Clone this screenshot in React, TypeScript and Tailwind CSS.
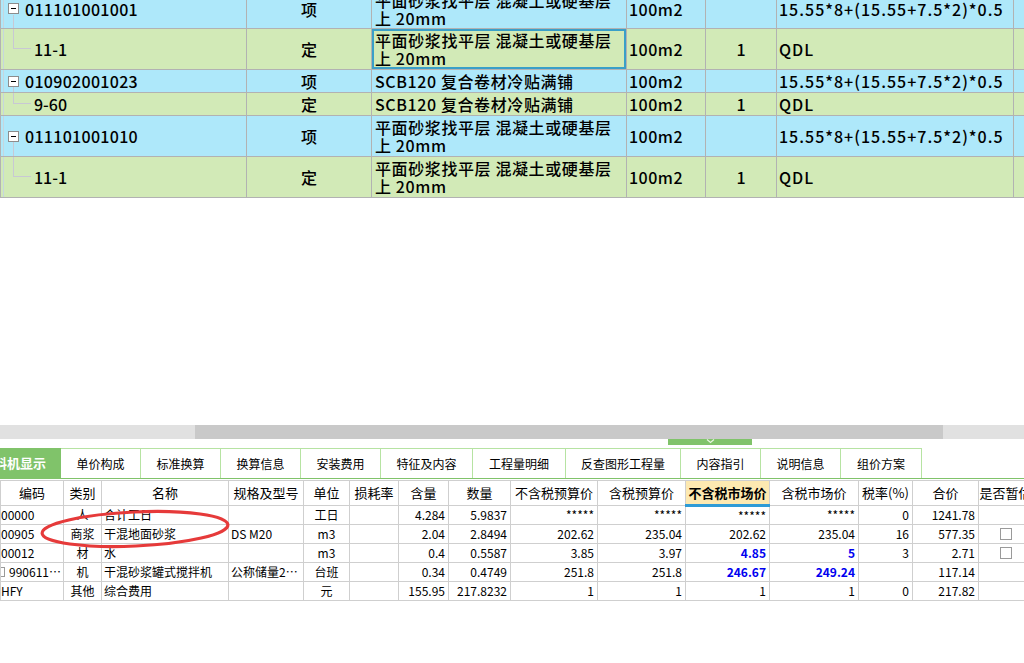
import React from "react";

type TopRow = {
  code: string;
  kind: string;
  name: React.ReactNode;
  qty: string;
  expr: string;
  parent: boolean;
  tall: boolean;
  focus?: boolean;
};

const longName = (
  <>
    平面砂浆找平层 混凝土或硬基层
    <br />
    上 20mm
  </>
);
const expr = "15.55*8+(15.55+7.5*2)*0.5";

const topRows: TopRow[] = [
  { code: "011101001001", kind: "项", name: longName, qty: "", expr, parent: true, tall: true },
  { code: "11-1", kind: "定", name: longName, qty: "1", expr: "QDL", parent: false, tall: true, focus: true },
  { code: "010902001023", kind: "项", name: "SCB120 复合卷材冷贴满铺", qty: "", expr, parent: true, tall: false },
  { code: "9-60", kind: "定", name: "SCB120 复合卷材冷贴满铺", qty: "1", expr: "QDL", parent: false, tall: false },
  { code: "011101001010", kind: "项", name: longName, qty: "", expr, parent: true, tall: true },
  { code: "11-1", kind: "定", name: longName, qty: "1", expr: "QDL", parent: false, tall: true },
];

const tabs = [
  { label: "单价构成", w: "w-[80px]" },
  { label: "标准换算", w: "w-[80px]" },
  { label: "换算信息", w: "w-[80px]" },
  { label: "安装费用", w: "w-[80px]" },
  { label: "特征及内容", w: "w-[92px]" },
  { label: "工程量明细", w: "w-[93px]" },
  { label: "反查图形工程量", w: "w-[115px]" },
  { label: "内容指引", w: "w-[80px]" },
  { label: "说明信息", w: "w-[80px]" },
  { label: "组价方案", w: "w-[81px]" },
];

const cols = [
  { h: "编码", w: 63, align: "text-left" },
  { h: "类别", w: 38, align: "text-center" },
  { h: "名称", w: 127, align: "text-left" },
  { h: "规格及型号", w: 75, align: "text-left" },
  { h: "单位", w: 46, align: "text-center" },
  { h: "损耗率", w: 49, align: "text-right" },
  { h: "含量", w: 50, align: "text-right" },
  { h: "数量", w: 62, align: "text-right" },
  { h: "不含税预算价", w: 87, align: "text-right" },
  { h: "含税预算价", w: 88, align: "text-right" },
  { h: "不含税市场价", w: 84, align: "text-right" },
  { h: "含税市场价", w: 89, align: "text-right" },
  { h: "税率(%)", w: 54, align: "text-right" },
  { h: "合价", w: 66, align: "text-right" },
  { h: "是否暂估", w: 54, align: "text-center" },
];

// blue = market price edited by hand
type Cell = string | { v: string; blue: true } | { check: true };

const detailRows: Cell[][] = [
  ["00000", "人", "合计工日", "", "工日", "", "4.284", "5.9837", "*****", "*****", "*****", "*****", "0", "1241.78", ""],
  ["00905", "商浆", "干混地面砂浆", "DS M20", "m3", "", "2.04", "2.8494", "202.62", "235.04", "202.62", "235.04", "16", "577.35", { check: true }],
  ["00012", "材", "水", "", "m3", "", "0.4", "0.5587", "3.85", "3.97", { v: "4.85", blue: true }, { v: "5", blue: true }, "3", "2.71", { check: true }],
  ["990611…", "机", "干混砂浆罐式搅拌机", "公称储量2…", "台班", "", "0.34", "0.4749", "251.8", "251.8", { v: "246.67", blue: true }, { v: "249.24", blue: true }, "", "117.14", ""],
  ["HFY", "其他", "综合费用", "", "元", "", "155.95", "217.8232", "1", "1", "1", "1", "0", "217.82", ""],
];

function TreeCell({ row }: { row: TopRow }) {
  return (
    <td className="relative border border-[#b2b2b2] p-0">
      <span className="absolute left-[2px] top-0 bottom-0 border-l border-[#c6d6de]" />
      {row.parent ? (
        <>
          <div className="flex items-center">
            <span className="ml-[7px] flex h-[11px] w-[11px] items-center justify-center border border-[#8c8c8c] bg-white">
              <span className="h-px w-[5px] bg-black" />
            </span>
            <span className="ml-[6px] tracking-[0.3px]">{row.code}</span>
          </div>
          <span className="absolute left-[12px] top-[calc(50%+6px)] bottom-0 border-l border-[#c8c8d4]" />
        </>
      ) : (
        <>
          <span className="absolute left-[12px] top-0 h-1/2 w-[18px] border-b border-l border-[#c8c8d4]" />
          <span className="pl-[33px]">{row.code}</span>
        </>
      )}
    </td>
  );
}

export default function App() {
  return (
    <div className="flex h-[663px] w-[1024px] flex-col overflow-hidden bg-white font-['Noto_Sans_CJK_SC','Noto_Sans',sans-serif] text-black">
      {/* upper grid: bill items, scrolled a little */}
      <div className="h-[425px] shrink-0 overflow-hidden">
        <table className="-mt-[12px] w-[1040px] table-fixed border-collapse text-[16px] font-medium leading-[18px]">
          <colgroup>
            <col className="w-[246px]" />
            <col className="w-[125px]" />
            <col className="w-[255px]" />
            <col className="w-[79px]" />
            <col className="w-[71px]" />
            <col className="w-[237px]" />
            <col className="w-[27px]" />
          </colgroup>
          <tbody>
            {topRows.map((r, i) => (
              <tr
                key={i}
                className={`${r.tall ? (i === 0 ? "h-[40px]" : "h-[41px]") : "h-[23px]"} ${
                  r.parent ? "bg-[#aee8fa]" : "bg-[#d2eab7]"
                }`}
              >
                <TreeCell row={r} />
                <td className="border border-[#b2b2b2] p-0 text-center">{r.kind}</td>
                <td className="relative border border-[#b2b2b2] px-[3px] py-0 tracking-[0.6px]">
                  {r.focus && <span className="absolute inset-0 border-2 border-[#3a9fc8]" />}
                  {r.name}
                </td>
                <td className="border border-[#b2b2b2] py-0 pl-[2px] tracking-[0.5px]">100m2</td>
                <td className="border border-[#b2b2b2] p-0 text-center">{r.qty}</td>
                <td className="whitespace-nowrap border border-[#b2b2b2] py-0 pl-[2px] tracking-[1px]">{r.expr}</td>
                <td className="border border-[#b2b2b2] p-0" />
              </tr>
            ))}
          </tbody>
        </table>
      </div>

      {/* horizontal scrollbar */}
      <div className="flex h-[14px] shrink-0 bg-[#e1e1e1]">
        <div className="w-[195px]" />
        <div className="w-[748px] bg-[#c9c9c9]" />
      </div>

      {/* splitter handle */}
      <div className="h-[9px] shrink-0">
        <div className="ml-[668px] flex h-[6px] w-[84px] items-start justify-center bg-[#80c36a]">
          <svg width="9" height="5" viewBox="0 0 9 5">
            <path d="M1 0.5 L4.5 3.5 L8 0.5" fill="none" stroke="#e8f6e0" strokeWidth="1.2" />
          </svg>
        </div>
      </div>

      {/* tabs */}
      <div className="flex h-[31px] shrink-0 border-b border-[#80c36a] text-[12px]">
        <div className="-ml-[34px] flex w-[95px] shrink-0 items-center justify-center bg-[#80c36a] text-[13px] font-bold text-white">
          工料机显示
        </div>
        {tabs.map((t) => (
          <div
            key={t.label}
            className={`${t.w} flex shrink-0 items-center justify-center border-t border-r border-[#b6e3a2] bg-white`}
          >
            {t.label}
          </div>
        ))}
      </div>

      {/* lower grid: labour / material / machine */}
      <div className="relative mt-px">
        <table className="w-[1032px] table-fixed border-collapse text-[12px] leading-[16px]">
          <colgroup>
            {cols.map((c) => (
              <col key={c.h} style={{ width: c.w }} />
            ))}
          </colgroup>
          <thead>
            <tr className="h-[25px]">
              {cols.map((c, i) =>
                i === 10 ? (
                  <th
                    key={c.h}
                    className="border border-[#cfcfcf] border-b-[3px] border-b-[#2f9bd6] bg-[#fde9b1] p-0 text-[13px] font-bold"
                  >
                    {c.h}
                  </th>
                ) : (
                  <th
                    key={c.h}
                    className="overflow-hidden whitespace-nowrap border border-[#cfcfcf] p-0 text-[13px] font-normal"
                  >
                    {c.h}
                  </th>
                ),
              )}
            </tr>
          </thead>
          <tbody>
            {detailRows.map((row, ri) => (
              <tr key={ri} className="h-[19px]">
                {row.map((cell, ci) => {
                  const c = cols[ci];
                  let content: React.ReactNode = null;
                  if (typeof cell === "string") content = cell;
                  else if ("check" in cell)
                    content = <span className="mx-auto block h-[12px] w-[12px] border border-[#9a9a9a] bg-white" />;
                  else content = <span className="font-bold text-[#0000f0]">{cell.v}</span>;
                  return (
                    <td
                      key={ci}
                      className={`${c.align} overflow-hidden whitespace-nowrap border border-[#cfcfcf] py-0 ${
                        ci === 0 ? "pl-0" : ci === 2 || ci === 3 ? "pl-[2px]" : "px-[3px]"
                      }`}
                    >
                      {ci === 0 && ri === 3 ? (
                        <span className="flex items-center">
                          <span className="-ml-[6px] mr-[4px] h-[10px] w-[10px] border border-[#9a9a9a]" />
                          {content}
                        </span>
                      ) : (
                        content
                      )}
                    </td>
                  );
                })}
              </tr>
            ))}
          </tbody>
        </table>

        {/* hand-drawn annotation */}
        <svg className="pointer-events-none absolute left-[38px] top-[27px]" width="196" height="44" viewBox="0 0 196 44">
          <ellipse
            cx="97"
            cy="22"
            rx="93"
            ry="17"
            transform="rotate(-2.6 97 22)"
            fill="none"
            stroke="#e63a3a"
            strokeWidth="3.2"
          />
        </svg>
      </div>
    </div>
  );
}
